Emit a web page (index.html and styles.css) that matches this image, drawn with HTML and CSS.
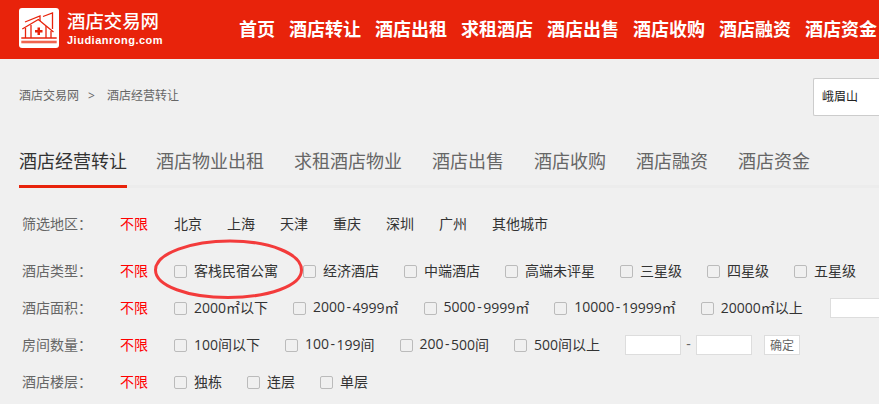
FILE: index.html
```html
<!DOCTYPE html>
<html lang="zh-CN">
<head>
    <meta charset="UTF-8" />
    <meta name="viewport" content="width=device-width, initial-scale=1" />
    <title>酒店经营转让</title>
    <link rel="stylesheet" href="styles.css">
</head>
<body>
<header class="header">
    <a class="logo">
        <svg class="logo-icon" width="40" height="40" viewBox="0 0 40 40">
            <rect width="40" height="40" rx="3" fill="#fff"/>
            <g fill="none" stroke="#e8230b" stroke-width="1.3">
                <path d="M3.3 21 L19.3 11.5 L34.5 24"/>
                <path d="M6 14 L21 8 V13"/>
                <path d="M24 8.5 L33.5 5 V21"/>
                <path d="M6.5 20 V30 M32 23 V30"/>
                <path d="M12 17 V30 M27 18 V30"/>
                <path d="M2.3 30 H37.7"/>
            </g>
            <path d="M18.5 19.5 H21 V22 H23.5 V24.5 H21 V27 H18.5 V24.5 H16 V22 H18.5 Z" fill="#e8230b"/>
            <rect x="2.3" y="32.7" width="35.4" height="2.6" fill="#f0644f"/>
        </svg>
        <div class="logo-text">
            <div class="logo-name">酒店交易网</div>
            <div class="logo-url">Jiudianrong.com</div>
        </div>
    </a>
    <nav class="nav">
        <a>首页</a>
        <a>酒店转让</a>
        <a>酒店出租</a>
        <a>求租酒店</a>
        <a>酒店出售</a>
        <a>酒店收购</a>
        <a>酒店融资</a>
        <a>酒店资金</a>
    </nav>
</header>

<div class="crumb-bar">
    <div class="crumbs"><a>酒店交易网</a><span class="sep">&gt;</span><a>酒店经营转让</a></div>
    <div class="search-box">峨眉山</div>
</div>

<div class="tabs">
    <a class="active">酒店经营转让</a>
    <a>酒店物业出租</a>
    <a>求租酒店物业</a>
    <a>酒店出售</a>
    <a>酒店收购</a>
    <a>酒店融资</a>
    <a>酒店资金</a>
</div>

<div class="filters">
    <div class="row row-area">
        <span class="label">筛选地区：</span>
        <a class="any">不限</a>
        <a class="city">北京</a>
        <a class="city">上海</a>
        <a class="city">天津</a>
        <a class="city">重庆</a>
        <a class="city">深圳</a>
        <a class="city">广州</a>
        <a class="city">其他城市</a>
    </div>
    <div class="row">
        <span class="label">酒店类型：</span>
        <a class="any">不限</a>
        <label class="check"><i></i>客栈民宿公寓</label>
        <label class="check"><i></i>经济酒店</label>
        <label class="check"><i></i>中端酒店</label>
        <label class="check"><i></i>高端未评星</label>
        <label class="check"><i></i>三星级</label>
        <label class="check"><i></i>四星级</label>
        <label class="check"><i></i>五星级</label>
        <svg class="circle" width="155" height="64" viewBox="0 0 155 64">
            <path d="M3.5 32 C3.5 15 40 3 78 3 C118 3 149.5 16 149.5 32 C149.5 48 116 59.5 76 59.5 C36 59.5 3.5 48 3.5 32 Z" fill="none" stroke="#f33b3b" stroke-width="3"/>
        </svg>
    </div>
    <div class="row row-size">
        <span class="label">酒店面积：</span>
        <a class="any">不限</a>
        <label class="check"><i></i>2000㎡以下</label>
        <label class="check"><i></i>2000<span class="hy">-</span>4999㎡</label>
        <label class="check"><i></i>5000<span class="hy">-</span>9999㎡</label>
        <label class="check"><i></i>10000<span class="hy">-</span>19999㎡</label>
        <label class="check"><i></i>20000㎡以上</label>
        <input class="num" type="text" />
    </div>
    <div class="row">
        <span class="label">房间数量：</span>
        <a class="any">不限</a>
        <label class="check"><i></i>100间以下</label>
        <label class="check"><i></i>100<span class="hy">-</span>199间</label>
        <label class="check"><i></i>200<span class="hy">-</span>500间</label>
        <label class="check"><i></i>500间以上</label>
        <input class="num" type="text" />
        <span class="dash">-</span>
        <input class="num" type="text" />
        <button class="ok">确定</button>
    </div>
    <div class="row">
        <span class="label">酒店楼层：</span>
        <a class="any">不限</a>
        <label class="check"><i></i>独栋</label>
        <label class="check"><i></i>连层</label>
        <label class="check"><i></i>单层</label>
    </div>
</div>
</body>
</html>
```

FILE: styles.css
```css
html, body {
    margin: 0;
    padding: 0;
    height: 404px;
    overflow: hidden;
}
body {
    width: 879px;
    background-color: #f0f0f0;
    font-family: "Open Sans", "Noto Sans CJK SC", sans-serif;
    font-size: 14px;
    color: #333;
}
.header {
    display: flex;
    height: 59px;
    padding-left: 19px;
    background-color: #e8230b;
    color: #fff;
    white-space: nowrap;
    overflow: hidden;
}
.logo {
    display: flex;
    gap: 8px;
    width: 220px;
    flex: none;
    padding-top: 8px;
}
.logo-name {
    font-size: 18.4px;
    line-height: 20px;
    margin-top: 3px;
    font-weight: 500;
}
.logo-url {
    font-family: "Liberation Sans", sans-serif;
    font-size: 11px;
    line-height: 14px;
    margin-top: 2px;
    font-weight: 700;
    letter-spacing: 0.5px;
}
.nav {
    display: flex;
    gap: 14px;
    font-size: 18px;
    font-weight: 700;
    line-height: 59px;
}
.crumb-bar {
    display: flex;
    justify-content: space-between;
    height: 38px;
    padding: 19px 0 0 19px;
}
.crumbs {
    font-size: 12px;
    line-height: 36px;
    color: #666;
}
.crumbs .sep {
    margin: 0 12px 0 9px;
}
.search-box {
    box-sizing: border-box;
    width: 66px;
    height: 38px;
    padding-left: 8px;
    background-color: #fff;
    border: 1px solid #ccc;
    border-right: none;
    border-radius: 2px 0 0 2px;
    font-size: 12px;
    line-height: 36px;
    color: #222;
}
.tabs {
    display: flex;
    align-items: flex-start;
    gap: 30px;
    height: 49px;
    margin: 20px 0 0 19px;
    border-bottom: 3px solid #ececec;
    font-size: 18px;
    line-height: 50px;
    color: #666;
    white-space: nowrap;
}
.tabs .active {
    height: 49px;
    margin-right: -1px;
    color: #333;
    border-bottom: 3px solid #e8230b;
}
.filters {
    padding: 19px 0 0 22px;
}
.row {
    position: relative;
    display: flex;
    align-items: center;
    height: 37px;
    white-space: nowrap;
}
.row-area {
    height: 32px;
    margin-bottom: 12px;
}
.label {
    width: 98px;
    flex: none;
    color: #666;
}
.any {
    width: 54px;
    flex: none;
    color: #f00;
}
.city {
    margin-right: 25px;
}
.check {
    display: flex;
    align-items: center;
    margin-right: 25px;
}
.check i {
    box-sizing: border-box;
    width: 13px;
    height: 13px;
    margin: 3px 7px 0 0;
    background-color: #f0f0f0;
    border: 1px solid #bbb;
    border-radius: 2px;
}
.hy {
    margin: 0 1.5px;
}
.num {
    box-sizing: border-box;
    width: 56px;
    height: 20px;
    margin-top: 3px;
    padding: 0;
    background-color: #fff;
    border: 1px solid #ddd;
    flex: none;
}
.row-size .num {
    margin-left: 2px;
}
.dash {
    width: 15px;
    flex: none;
    text-align: center;
    color: #666;
}
.ok {
    width: 36px;
    height: 20px;
    margin: 3px 0 0 12px;
    padding: 0;
    background-color: #fff;
    border: 1px solid #ddd;
    font-family: inherit;
    font-size: 12px;
    color: #666;
}
.circle {
    position: absolute;
    left: 130px;
    top: -13px;
    pointer-events: none;
}
```
